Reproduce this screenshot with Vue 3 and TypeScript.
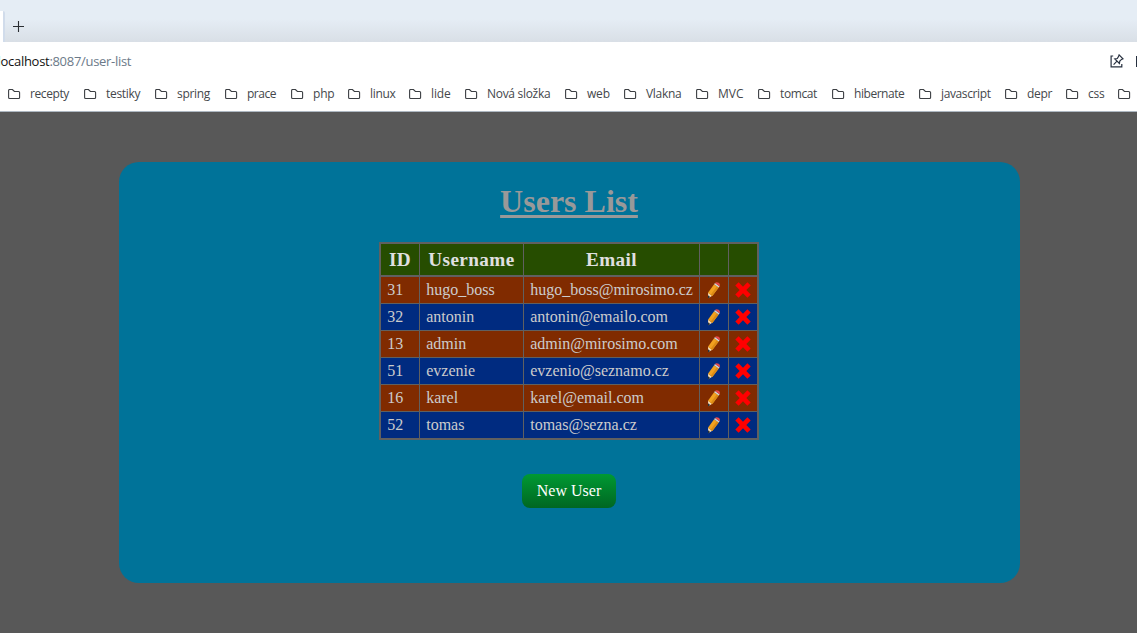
<script setup lang="ts">
interface Bookmark { label: string; width: number; spacing: number }
interface User { id: number; name: string; email: string }

const bookmarks: Bookmark[] = [
  { label: 'recepty', width: 76, spacing: -0.4 },
  { label: 'testiky', width: 71, spacing: -0.3 },
  { label: 'spring', width: 70, spacing: -0.3 },
  { label: 'prace', width: 66, spacing: -0.5 },
  { label: 'php', width: 57, spacing: -0.2 },
  { label: 'linux', width: 61, spacing: -0.3 },
  { label: 'lide', width: 56, spacing: -0.1 },
  { label: 'Nová složka', width: 100, spacing: -0.3 },
  { label: 'web', width: 59, spacing: -0.2 },
  { label: 'Vlakna', width: 72, spacing: -0.3 },
  { label: 'MVC', width: 62, spacing: 0 },
  { label: 'tomcat', width: 74, spacing: -0.4 },
  { label: 'hibernate', width: 87, spacing: -0.45 },
  { label: 'javascript', width: 86, spacing: -0.38 },
  { label: 'depr', width: 61, spacing: -0.3 },
  { label: 'css', width: 52, spacing: -0.2 },
  { label: '', width: 20, spacing: 0 },
]

const users: User[] = [
  { id: 31, name: 'hugo_boss', email: 'hugo_boss@mirosimo.cz' },
  { id: 32, name: 'antonin', email: 'antonin@emailo.com' },
  { id: 13, name: 'admin', email: 'admin@mirosimo.com' },
  { id: 51, name: 'evzenie', email: 'evzenio@seznamo.cz' },
  { id: 16, name: 'karel', email: 'karel@email.com' },
  { id: 52, name: 'tomas', email: 'tomas@sezna.cz' },
]
</script>

<template>
  <div class="window">
    <div class="tabs">
      <div class="tab"></div>
      <svg class="plus" width="11" height="11" viewBox="0 0 11 11"><path d="M5.5 0v11M0 5.5h11" stroke="#2b2e33" stroke-width="1.1" /></svg>
    </div>
    <div class="address">
      <div class="url"><span class="host">localhost</span><span>:8087/user-list</span></div>
      <div class="tools">
        <svg width="14" height="14" viewBox="0 0 14 14" fill="none" stroke="#27303f" stroke-width="1.2">
          <path d="M3.2 2H1.1v10.9h10.7V9.9" />
          <path d="M9.1.9l3.9 3.9-1.5.6-1.7 1.6-.4 2.5-4.6-4.6 2.5-.4 1.2-1.9zM7 7.2 3.6 10.6" />
        </svg>
        <span class="edge"></span>
      </div>
    </div>
    <div class="bookmarks">
      <div v-for="(b, i) in bookmarks" :key="i" class="bookmark" :style="{ width: b.width + 'px' }">
        <svg width="13" height="11" viewBox="0 0 13 11" fill="none" stroke="#3c3f43" stroke-width="1.1">
          <path d="M.6 8.5V1.5Q.6.5 1.6.5H4.4L6.4 2.5h4.2q1 0 1 1v5q0 1-1 1H1.6Q.6 9.5.6 8.5z" />
        </svg>
        <span :style="{ letterSpacing: b.spacing + 'px' }">{{ b.label }}</span>
      </div>
    </div>
    <main>
      <section class="card">
        <h1>Users List</h1>
        <div class="table">
          <div class="row head">
            <div>ID</div><div>Username</div><div>Email</div><div></div><div></div>
          </div>
          <div v-for="u in users" :key="u.id" class="row">
            <div>{{ u.id }}</div>
            <div>{{ u.name }}</div>
            <div>{{ u.email }}</div>
            <div class="icon">
              <svg width="14" height="17" viewBox="0 0 14 17">
                <path d="M1 10.7 5.3 13.8 1.2 16.2z" fill="#f4d9b4" />
                <path d="M1 13.3 3.2 15 1 16.4z" fill="#26313b" />
                <path d="M1 10.7 7.1 2.3l4.6 3.2L5.3 13.9z" fill="#f2a11f" />
                <path d="M3.7 12.7 9.9 4.3l1.8 1.2L5.3 13.9z" fill="#db8a16" />
                <path d="M7.1 2.3l.9-1.2 4.6 3.2-.9 1.2z" fill="#d3d7d8" />
                <path d="M8 1.1Q9.3-.4 11.6.8q2.1 1.4 1 3.5z" fill="#e8494b" />
              </svg>
            </div>
            <div class="icon">
              <svg width="16" height="16" viewBox="0 0 16 16"><path d="M3.6.3 8 4.7 12.4.3 15.7 3.6 11.3 8l4.4 4.4-3.3 3.3L8 11.3l-4.4 4.4L.3 12.4 4.7 8 .3 3.6z" fill="#f00" /></svg>
            </div>
          </div>
        </div>
        <button type="button">New User</button>
      </section>
    </main>
  </div>
</template>

<style>
body { margin: 0; overflow: hidden; }
</style>

<style scoped>
.window { width: 1137px; height: 633px; overflow: hidden; background: #585858; box-sizing: border-box; display: flex; flex-direction: column; font-family: "Open Sans", "Noto Sans", sans-serif; }
.tabs { height: 42px; flex: none; display: flex; background: linear-gradient(#e5edf5 0 45%, #d9dfe6); }
.tab { width: 3px; margin-top: 11px; background: #fff; border-top-right-radius: 2px; border-right: 2px solid #d1dceb; }
.plus { margin: 21px 0 0 8px; }
.address { height: 38px; flex: none; display: flex; justify-content: space-between; background: #fff; }
.url { margin-left: -2.4px; line-height: 39px; font-size: 13px; color: #6c7a89; white-space: nowrap; letter-spacing: -0.3px; }
.host { color: #111; }
.tools { display: flex; gap: 12px; padding-top: 12px; }
.edge { width: 1px; height: 11px; margin-top: 2px; background: #27303f; }
.bookmarks { height: 31px; flex: none; display: flex; padding-left: 8px; background: #fff; border-bottom: 1px solid #aeb8c2; }
.bookmark { flex: none; display: flex; gap: 9px; line-height: 28px; font-size: 12px; color: #44474b; white-space: nowrap; }
.bookmark svg { flex: none; margin-top: 9px; }
main { flex: 1; padding: 50px 117px 50px 119px; font-family: "Liberation Serif", "Times New Roman", serif; }
.card { height: 421px; border-radius: 20px; background: #007399; display: flex; flex-direction: column; align-items: center; }
h1 { margin: 21px 1px 0 0; font-size: 32px; line-height: 37px; height: 59px; color: #999; text-decoration: underline; text-decoration-thickness: 3px; text-underline-offset: 3px; }
.table { width: 376px; margin-right: 2px; border: 2px solid #606060; color: #ccc; font-size: 16px; }
.row { display: grid; grid-template-columns: 39px 104px 176px 29px 28px; height: 27px; box-sizing: border-box; border-bottom: 1px solid #606060; }
.row > div { box-sizing: border-box; padding-left: 6.7px; line-height: 26px; border-right: 1px solid #606060; white-space: nowrap; }
.row > div:last-child { border-right: 0; }
.row:nth-child(even) { background: #802b00; }
.row:nth-child(odd) { background: #002b80; }
.row:last-child { height: 26px; border-bottom: 0; }
.row.head { height: 33px; border-bottom-width: 2px; background: #264d00; color: #e0e0e0; font-size: 19.2px; font-weight: bold; letter-spacing: 0.4px; }
.row.head > div { padding: 0 0 0 1px; line-height: 31px; text-align: center; }
.row > .icon { padding: 0; height: 26px; display: flex; align-items: center; justify-content: center; }
button { margin: 34px 2px 0 0; width: 94px; height: 34px; padding: 0 0 0 1px; border: 0; border-radius: 8px; background: linear-gradient(#009933, #006622); color: #fff; font: 16px/34px "Liberation Serif", "Times New Roman", serif; }
</style>
